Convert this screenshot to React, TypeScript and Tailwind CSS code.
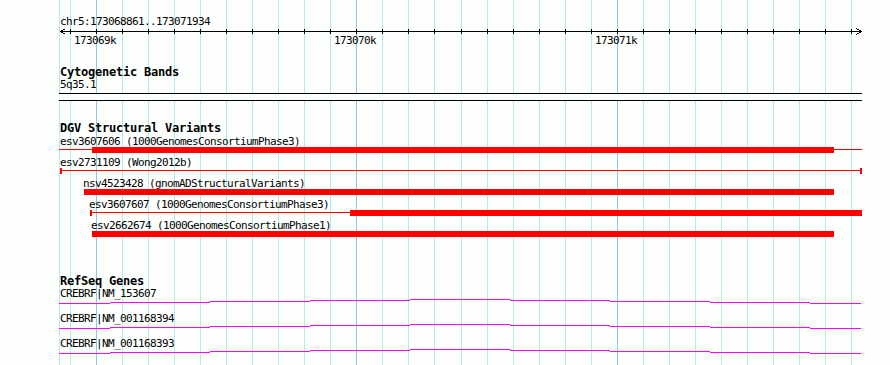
const GRID = [
  59, 70, 96, 122, 148, 174, 200, 226, 252, 278, 304, 330, 356, 382, 408, 434,
  461, 487, 513, 539, 565, 591, 617, 643, 669, 695, 721, 747, 773, 799, 825, 851,
];
const MAJOR = [96, 356, 617];

// intron "hat" steps: [width, offset from top]
const HAT: [number, number][] = [
  [51, 4], [100, 3], [100, 2], [100, 1], [100, 0], [100, 1], [100, 2], [100, 3], [51, 4],
];

const RED = "bg-[#ff0000]";

function Grid() {
  return (
    <svg className="absolute inset-0" width={890} height={365} shapeRendering="crispEdges">
      {GRID.map((x) => (
        <rect
          key={x}
          x={x}
          y={0}
          width={1}
          height={365}
          fill={MAJOR.includes(x) ? "#88c9ec" : "#afeeee"}
        />
      ))}
    </svg>
  );
}

function Axis() {
  return (
    <svg className="block overflow-visible" width={890} height={6} shapeRendering="crispEdges">
      <rect x={60} y={3} width={802} height={1} fill="#000" />
      {GRID.slice(1).map((x) => (
        <rect key={x} x={x} y={1} width={1} height={5} fill="#000" />
      ))}
      <polyline points="65.5,0.5 60.5,3.5 65.5,6.5" fill="none" stroke="#000" strokeWidth={1} />
      <polyline points="856.5,0.5 861.5,3.5 856.5,6.5" fill="none" stroke="#000" strokeWidth={1} />
    </svg>
  );
}

function Label({ x, children }: { x: number; children: React.ReactNode }) {
  return (
    <div className="h-[12px] leading-[13px] whitespace-nowrap" style={{ paddingLeft: x }}>
      {children}
    </div>
  );
}

function GeneRow({ name }: { name: string }) {
  return (
    <div className="h-[25px]">
      <Label x={60}>{name}</Label>
      <div className="ml-[59px] flex items-start h-[5px]">
        {HAT.map(([w, t], i) => (
          <div
            key={i}
            className="h-px bg-[#ff00ff]"
            style={{ width: w, marginTop: t }}
          />
        ))}
      </div>
    </div>
  );
}

export default function App() {
  return (
    <div className="relative w-[890px] h-[365px] overflow-hidden bg-[#fdfffd] text-black font-['DejaVu_Sans_Mono',monospace] text-[11px] tracking-[-0.62px]">
      <Grid />
      <div className="relative pt-[15px]">
        {/* ruler */}
        <div className="h-[13px] leading-[13px] pl-[60px]">chr5:173068861..173071934</div>
        <Axis />
        <div className="flex h-[13px] leading-[13px]">
          <span className="ml-[74px] w-[42px]">173069k</span>
          <span className="ml-[218px] w-[42px]">173070k</span>
          <span className="ml-[219px] w-[42px]">173071k</span>
        </div>

        {/* cytoband */}
        <div className="mt-[19px] h-[12px] leading-[13px] pl-[60px] text-[12px] font-bold tracking-[-0.22px]">
          Cytogenetic Bands
        </div>
        <div className="h-[13px] leading-[13px] pl-[60px]">5q35.1</div>
        <div className="mt-[2px] ml-[59px] w-[803px] h-[8px] border-y border-black bg-[#fdfffd]" />

        {/* DGV */}
        <div className="mt-[21px] h-[13px] leading-[13px] pl-[60px] text-[12px] font-bold tracking-[-0.22px]">
          DGV Structural Variants
        </div>

        <div className="h-[21px]">
          <Label x={60}>esv3607606 (1000GenomesConsortiumPhase3)</Label>
          <div className="ml-[59px] flex items-start h-[6px]">
            <div className={`w-[33px] h-px mt-[2px] ${RED}`} />
            <div className={`w-[742px] h-[6px] ${RED}`} />
            <div className={`w-[28px] h-px mt-[2px] ${RED}`} />
          </div>
        </div>

        <div className="h-[21px]">
          <Label x={60}>esv2731109 (Wong2012b)</Label>
          <div className="ml-[60px] flex items-start h-[6px]">
            <div className={`w-[2px] h-[6px] ${RED}`} />
            <div className={`w-[798px] h-px mt-[2px] ${RED}`} />
            <div className={`w-[2px] h-[6px] ${RED}`} />
          </div>
        </div>

        <div className="h-[21px]">
          <Label x={83}>nsv4523428 (gnomADStructuralVariants)</Label>
          <div className={`ml-[84px] w-[750px] h-[6px] ${RED}`} />
        </div>

        <div className="h-[21px]">
          <Label x={89}>esv3607607 (1000GenomesConsortiumPhase3)</Label>
          <div className="ml-[90px] flex items-start h-[6px]">
            <div className={`w-[2px] h-[6px] ${RED}`} />
            <div className={`w-[258px] h-px mt-[2px] ${RED}`} />
            <div className={`w-[512px] h-[6px] ${RED}`} />
          </div>
        </div>

        <div className="h-[21px]">
          <Label x={91}>esv2662674 (1000GenomesConsortiumPhase1)</Label>
          <div className={`ml-[92px] w-[742px] h-[6px] ${RED}`} />
        </div>

        {/* RefSeq */}
        <div className="mt-[35px] h-[12px] leading-[13px] pl-[60px] text-[12px] font-bold tracking-[-0.22px]">
          RefSeq Genes
        </div>
        <GeneRow name="CREBRF|NM_153607" />
        <GeneRow name="CREBRF|NM_001168394" />
        <GeneRow name="CREBRF|NM_001168393" />
      </div>
    </div>
  );
}
